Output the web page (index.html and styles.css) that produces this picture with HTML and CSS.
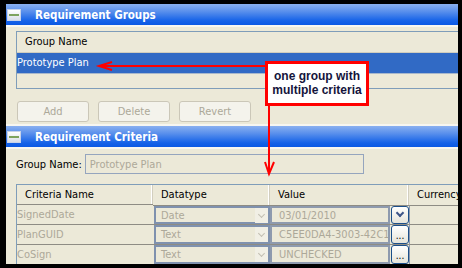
FILE: index.html
```html
<!DOCTYPE html>
<html lang="en">
<head>
    <meta charset="UTF-8">
    <title>Requirement Groups</title>
    <link rel="stylesheet" href="styles.css">
</head>
<body>
    <div class="window">
        <section class="pane">
            <div class="pane-head"><span class="collapse"></span>Requirement Groups</div>
            <div class="pane-body">
                <div class="list">
                    <div class="list-head">Group Name</div>
                    <div class="list-row selected">Prototype Plan</div>
                    <div class="list-row empty"></div>
                </div>
                <div class="buttons">
                    <button disabled>Add</button>
                    <button disabled>Delete</button>
                    <button disabled>Revert</button>
                </div>
            </div>
        </section>

        <section class="pane second">
            <div class="pane-head"><span class="collapse"></span>Requirement Criteria</div>
            <div class="pane-body">
                <div class="field">
                    <label>Group Name:</label>
                    <input type="text" value="Prototype Plan" disabled>
                </div>
                <div class="grid">
                    <div class="gh">Criteria Name</div>
                    <div class="gh">Datatype</div>
                    <div class="gh">Value</div>
                    <div class="gh">Currency</div>

                    <div class="cell name">SignedDate</div>
                    <div class="cell"><div class="combo"><span>Date</span><span class="drop"></span></div></div>
                    <div class="cell"><div class="value"><span class="box">03/01/2010</span><span class="btn chevron"></span></div></div>
                    <div class="cell cur"></div>

                    <div class="cell name">PlanGUID</div>
                    <div class="cell"><div class="combo"><span>Text</span><span class="drop"></span></div></div>
                    <div class="cell"><div class="value"><span class="box">C5EE0DA4-3003-42C1</span><span class="btn">...</span></div></div>
                    <div class="cell cur"></div>

                    <div class="cell name">CoSign</div>
                    <div class="cell"><div class="combo"><span>Text</span><span class="drop"></span></div></div>
                    <div class="cell"><div class="value"><span class="box">UNCHECKED</span><span class="btn">...</span></div></div>
                    <div class="cell cur"></div>
                </div>
            </div>
        </section>

        <!-- annotation -->
        <svg class="arrows" width="452" height="260" viewBox="0 0 452 260">
            <path d="M259 62 H93 M106 58 L93 62 L106 66" />
            <path d="M263 102 V170 M259 158 L263 170 L268 158" />
        </svg>
        <div class="callout">one group with<br>multiple criteria</div>
    </div>
</body>
</html>
```

FILE: styles.css
```css
body {
    margin: 0;
    background-color: #000;
    font-family: "DejaVu Sans Condensed", "Liberation Sans", sans-serif;
    font-size: 11px;
    color: #000;
}

.window {
    position: relative;
    margin: 4px 4px 0 6px;
    width: 452px;
    height: 260px;
    overflow: hidden;
    background-color: #ECE9D8;
}

.pane-head {
    display: flex;
    align-items: center;
    height: 21px;
    border-bottom: 2px solid #F7F6F0;
    background: linear-gradient(to bottom, #8AB0F0 0%, #5A90EC 35%, #1562E8 80%, #0A58E4 100%);
    color: #fff;
    font-weight: bold;
    font-size: 11.5px;
}

.collapse {
    position: relative;
    width: 12px;
    height: 10px;
    margin: 0 14px 0 1px;
    background: linear-gradient(to bottom, #FFFFFF, #D8DDE8);
    border: 1px solid #C6D2EA;
}

.collapse::after {
    content: "";
    position: absolute;
    left: 1px;
    right: 1px;
    top: 4px;
    height: 2px;
    background-color: #7DA35E;
}

.pane-body {
    padding: 4px 0 0 10px;
}

.list {
    width: 460px;
    border: 1px solid #7F9DB9;
    border-right: none;
    background-color: #ECE9D8;
}

.list-head {
    height: 20px;
    line-height: 20px;
    padding-left: 8px;
    border-bottom: 1px solid #D0CDBE;
}

.list-row {
    height: 20px;
    line-height: 20px;
    border-bottom: 1px solid #A8B8CC;
}

.list-row.selected {
    background-color: #316AC5;
    color: #fff;
}

.list-row.empty {
    height: 14px;
    border-bottom: none;
}

.buttons {
    display: flex;
    gap: 9px;
    margin: 12px 0 0 1px;
}

button {
    width: 72px;
    height: 21px;
    padding: 0;
    border: 1px solid #CBC7B8;
    border-radius: 3px;
    background-color: #F4F3EC;
    color: #ACA899;
    font-family: inherit;
    font-size: 11px;
}

.second {
    margin-top: 2px;
    border-top: 2px solid #F7F6F0;
}

.field {
    display: flex;
    align-items: center;
    gap: 3px;
    padding-top: 1px;
}

.field input {
    width: 269px;
    height: 18px;
    padding: 0 4px;
    border: 1px solid #95A5BE;
    background-color: #ECE9D8;
    color: #ACA899;
    font-family: inherit;
    font-size: 11px;
}

.grid {
    display: grid;
    grid-template-columns: 136px 117px 139px 80px;
    margin-top: 10px;
    border-top: 1px solid #7F9DB9;
    border-left: 1px solid #7F9DB9;
}

.gh {
    height: 20px;
    line-height: 20px;
    padding-left: 8px;
    border-right: 1px solid #D2CEBF;
    box-shadow: inset -1px 0 0 #FFFFFF;
    white-space: nowrap;
}

.cell {
    height: 20px;
    box-sizing: border-box;
    border-bottom: 1px solid #8E8C84;
    color: #ACA899;
}

.cell.name {
    line-height: 19px;
    border-top: 1px solid #8E8C84;
    margin-top: -1px;
    height: 21px;
}

.grid > .cell:nth-child(5),
.grid > .cell:nth-child(6),
.grid > .cell:nth-child(7),
.grid > .cell:nth-child(8) {
    border-top: 1px solid #8E8C84;
}

.combo {
    display: flex;
    align-items: center;
    justify-content: space-between;
    height: 100%;
    margin-left: 1px;
    box-sizing: border-box;
    border: 2px solid #7F91AE;
    padding-left: 5px;
}

.drop {
    position: relative;
    width: 13px;
    height: 15px;
    background-color: #F1EFE5;
}

.drop::after {
    content: "";
    position: absolute;
    left: 4px;
    top: 4px;
    width: 4px;
    height: 4px;
    border-right: 1px solid #C2BFB2;
    border-bottom: 1px solid #C2BFB2;
    transform: rotate(45deg);
}

.value {
    display: flex;
    height: 100%;
}

.box {
    flex: 1;
    box-sizing: border-box;
    border: 2px solid #8E9AAE;
    padding-left: 7px;
    line-height: 15px;
    white-space: nowrap;
    overflow: hidden;
}

.btn {
    position: relative;
    width: 18px;
    box-sizing: border-box;
    margin: 0 0 0 1px;
    border: 1px solid #1C4F8A;
    border-radius: 3px;
    background: linear-gradient(to bottom, #FFFFFF, #E6E4DA);
    color: #000;
    text-align: center;
    line-height: 19px;
    font-size: 10px;
}

.btn.chevron::after {
    content: "";
    position: absolute;
    left: 5px;
    top: 3px;
    width: 4px;
    height: 4px;
    border-right: 2px solid #3D5488;
    border-bottom: 2px solid #3D5488;
    transform: rotate(45deg);
}

.cur {
    border-left: 1px solid #8E9AAE;
}

.arrows {
    position: absolute;
    left: 0;
    top: 0;
}

.arrows path {
    fill: none;
    stroke: #FF0000;
    stroke-width: 2;
}

.callout {
    position: absolute;
    left: 259px;
    top: 57px;
    width: 98px;
    height: 34px;
    padding-top: 5px;
    border: 3px solid #FF0000;
    background-color: #fff;
    color: #14143C;
    font-family: "Liberation Sans", Arial, sans-serif;
    font-weight: bold;
    font-size: 12px;
    line-height: 14px;
    text-align: center;
}
```
